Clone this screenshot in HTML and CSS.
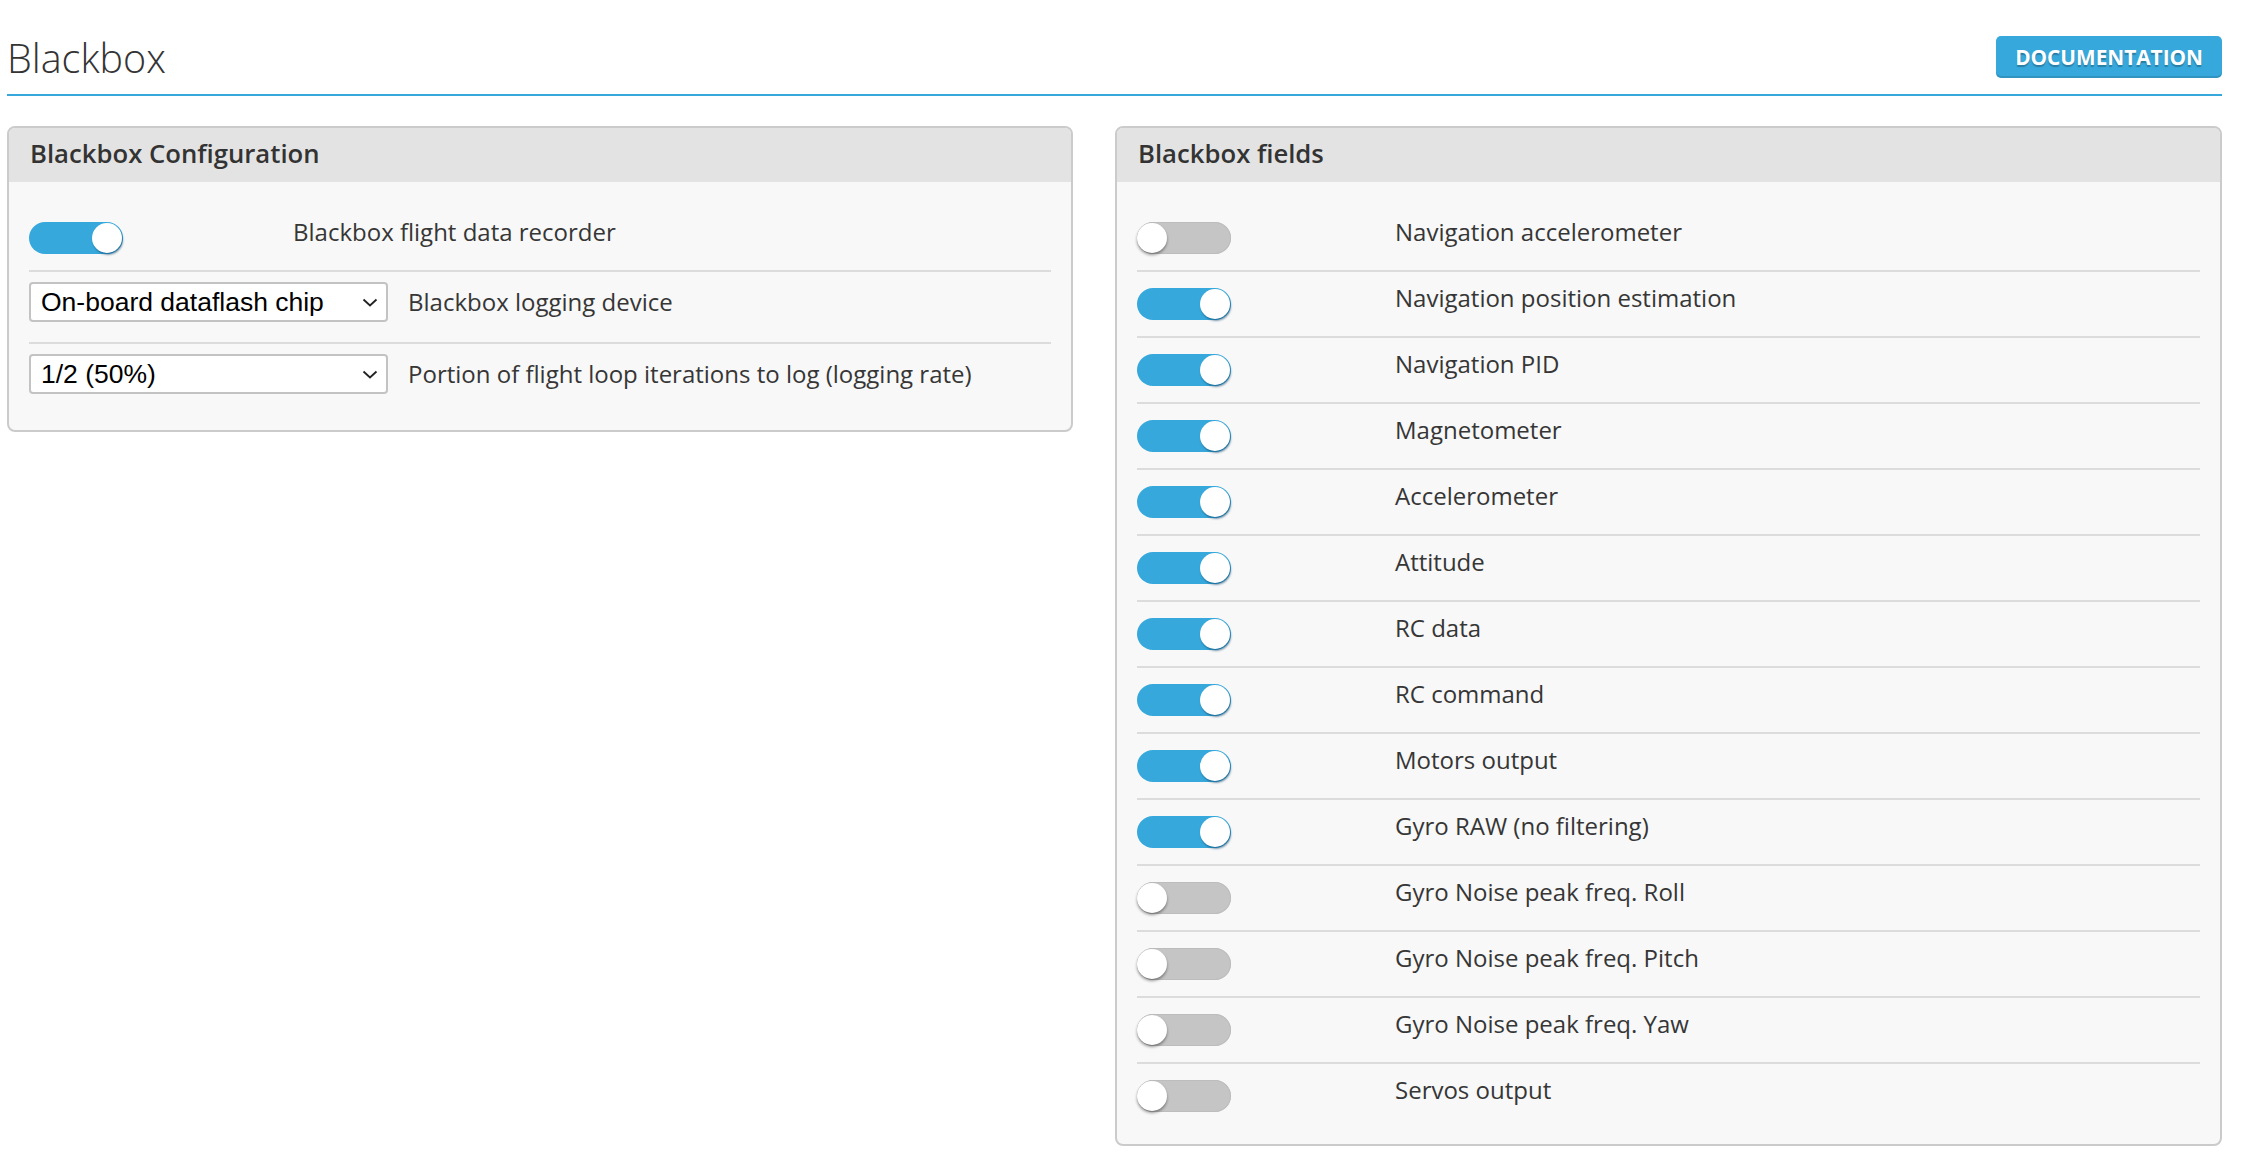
FILE: index.html
```html
<!DOCTYPE html>
<html lang="en">
<head>
<meta charset="utf-8">
<title>Blackbox</title>
<link rel="stylesheet" href="styles.css">
</head>
<body>
<div class="page">
  <header class="tab-header">
    <h1 class="tab-title">Blackbox</h1>
    <a class="btn-doc">DOCUMENTATION</a>
  </header>

  <div class="columns">
    <section class="panel">
      <div class="panel-head">Blackbox Configuration</div>
      <div class="panel-body">
        <div class="row row-toggle">
          <span class="toggle on"><span class="knob"></span></span>
          <span class="label label-cfg">Blackbox flight data recorder</span>
        </div>
        <div class="row row-select">
          <div class="select-wrap">
            <select class="select"><option>On-board dataflash chip</option></select>
            <svg class="chev" width="16" height="9" viewBox="0 0 16 9"><path d="M1.5 1.5 L8 7.5 L14.5 1.5" fill="none" stroke="#222" stroke-width="1.8"/></svg>
          </div>
          <span class="label label-sel">Blackbox logging device</span>
        </div>
        <div class="row row-select">
          <div class="select-wrap">
            <select class="select"><option>1/2 (50%)</option></select>
            <svg class="chev" width="16" height="9" viewBox="0 0 16 9"><path d="M1.5 1.5 L8 7.5 L14.5 1.5" fill="none" stroke="#222" stroke-width="1.8"/></svg>
          </div>
          <span class="label label-sel">Portion of flight loop iterations to log (logging rate)</span>
        </div>
      </div>
    </section>

    <section class="panel">
      <div class="panel-head">Blackbox fields</div>
      <div class="panel-body">
        <div class="row row-toggle"><span class="toggle"><span class="knob"></span></span><span class="label label-fld">Navigation accelerometer</span></div>
        <div class="row row-toggle"><span class="toggle on"><span class="knob"></span></span><span class="label label-fld">Navigation position estimation</span></div>
        <div class="row row-toggle"><span class="toggle on"><span class="knob"></span></span><span class="label label-fld">Navigation PID</span></div>
        <div class="row row-toggle"><span class="toggle on"><span class="knob"></span></span><span class="label label-fld">Magnetometer</span></div>
        <div class="row row-toggle"><span class="toggle on"><span class="knob"></span></span><span class="label label-fld">Accelerometer</span></div>
        <div class="row row-toggle"><span class="toggle on"><span class="knob"></span></span><span class="label label-fld">Attitude</span></div>
        <div class="row row-toggle"><span class="toggle on"><span class="knob"></span></span><span class="label label-fld">RC data</span></div>
        <div class="row row-toggle"><span class="toggle on"><span class="knob"></span></span><span class="label label-fld">RC command</span></div>
        <div class="row row-toggle"><span class="toggle on"><span class="knob"></span></span><span class="label label-fld">Motors output</span></div>
        <div class="row row-toggle"><span class="toggle on"><span class="knob"></span></span><span class="label label-fld">Gyro RAW (no filtering)</span></div>
        <div class="row row-toggle"><span class="toggle"><span class="knob"></span></span><span class="label label-fld">Gyro Noise peak freq. Roll</span></div>
        <div class="row row-toggle"><span class="toggle"><span class="knob"></span></span><span class="label label-fld">Gyro Noise peak freq. Pitch</span></div>
        <div class="row row-toggle"><span class="toggle"><span class="knob"></span></span><span class="label label-fld">Gyro Noise peak freq. Yaw</span></div>
        <div class="row row-toggle"><span class="toggle"><span class="knob"></span></span><span class="label label-fld">Servos output</span></div>
      </div>
    </section>
  </div>
</div>
</body>
</html>
```

FILE: styles.css
```css
* { box-sizing: border-box; }

html, body {
  margin: 0;
  background: #ffffff;
  font-family: "Open Sans", "Noto Sans", sans-serif;
  color: #333333;
}

.page {
  padding: 0 20px 0 7px;
}

/* ---------- tab header ---------- */
.tab-header {
  display: flex;
  justify-content: space-between;
  align-items: flex-start;
  padding-top: 34px;
  padding-bottom: 10px;
  border-bottom: 2px solid #37a8db;
}

.tab-title {
  margin: 0;
  font-size: 39.5px;
  font-weight: 300;
  line-height: 48px;
  height: 50px;
  color: #343434;
}

.btn-doc {
  margin-top: 2px;
  display: block;
  height: 42px;
  line-height: 42px;
  padding: 0 19px;
  background: #37a8db;
  border-radius: 5px;
  box-shadow: inset 0 -2px 0 rgba(0, 0, 0, 0.12);
  color: #ffffff;
  font-size: 20.8px;
  font-weight: 700;
  text-shadow: 0 2px 1px rgba(0, 0, 0, 0.25);
}

/* ---------- columns ---------- */
.columns {
  margin-top: 30px;
  display: grid;
  grid-template-columns: 1066px 1fr;
  column-gap: 42px;
  align-items: start;
}

.panel {
  border: 2px solid #cbcbcb;
  border-radius: 8px;
  background: #f8f8f8;
  overflow: hidden;
}

.panel-head {
  height: 54px;
  padding: 0 21px 0;
  line-height: 52px;
  background: #e3e3e3;
  font-size: 25.7px;
  font-weight: 600;
  color: #333333;
}

.panel-body {
  padding: 24px 20px 16px;
}

/* ---------- rows ---------- */
.row {
  display: flex;
  border-bottom: 2px solid #dcdcdc;
}
.row:last-child { border-bottom: none; }

.row-toggle {
  align-items: flex-start;
  padding: 16px 0;
}

.row-select {
  align-items: center;
  padding: 10px 0 20px;
}

.label {
  font-size: 24px;
  line-height: 20px;
  color: #363636;
  white-space: nowrap;
}
.label-cfg { margin-left: 170px; }
.label-fld { margin-left: 164px; }
.label-sel { margin-left: 20px; }

/* ---------- toggle ---------- */
.toggle {
  position: relative;
  flex: none;
  width: 94px;
  height: 32px;
  border-radius: 16px;
  background: #c5c5c5;
  box-shadow: inset 0 0 0 1px #bdbdbd;
}
.toggle.on {
  background: #37a8db;
  box-shadow: none;
}
.knob {
  position: absolute;
  top: 1px;
  left: 0;
  width: 30px;
  height: 30px;
  border-radius: 50%;
  background: #ffffff;
  box-shadow: 0 2px 3px rgba(0, 0, 0, 0.4);
}
.toggle.on .knob {
  left: auto;
  right: 1px;
  box-shadow: 1px 2px 2px rgba(10, 70, 110, 0.55);
}

/* ---------- select ---------- */
.select-wrap {
  position: relative;
  flex: none;
  width: 359px;
  height: 40px;
}
.select {
  appearance: none;
  -webkit-appearance: none;
  width: 100%;
  height: 100%;
  margin: 0;
  padding: 0 40px 0 10px;
  border: 2px solid #c3c3c3;
  border-radius: 4px;
  background: #ffffff;
  font-family: "Liberation Sans", Arial, sans-serif;
  font-size: 26.5px;
  color: #000000;
}
.chev {
  position: absolute;
  right: 10px;
  top: 16px;
  pointer-events: none;
}
```
